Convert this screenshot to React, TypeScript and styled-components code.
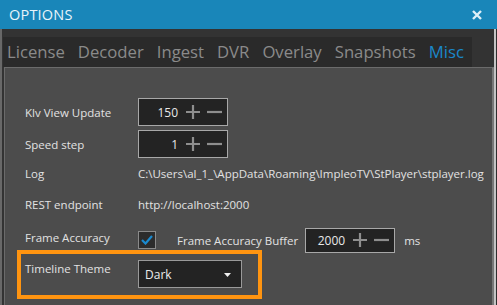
import { createGlobalStyle, styled } from "styled-components";

const GlobalStyle = createGlobalStyle`
  html, body {
    margin: 0;
    padding: 0;
    background: #2e2e2e;
  }
  body {
    font-family: "Open Sans", "Noto Sans", sans-serif;
  }
`;

const Page = styled.div`
  width: 497px;
  height: 305px;
  overflow: hidden;
  display: flex;
  flex-direction: column;
  background: #2e2e2e;
`;

const TitleBar = styled.div`
  height: 29px;
  flex: none;
  background: #1986b9;
  display: flex;
  align-items: center;
  justify-content: space-between;
  padding: 0 15px 0 9px;
`;

const Title = styled.div`
  color: #e8f4fa;
  font-size: 14.5px;
  letter-spacing: 0.2px;
`;

const Body = styled.div`
  width: 490px;
  flex: 1;
  display: flex;
  flex-direction: column;
  align-items: flex-start;
  background: #333333;
  border-left: 2px solid #686868;
  border-right: 2px solid #c4c4c4;
  padding: 8px 0 0 2px;
`;

const TabStrip = styled.div`
  height: 30px;
  display: flex;
  align-items: center;
  gap: 13px;
  background: #2a2a2a;
  padding: 0 8px 0 4px;
  margin-left: -1px;
`;

const Tab = styled.div<{ $active?: boolean }>`
  font-size: 16.7px;
  color: ${(p) => (p.$active ? "#1a88c9" : "#8a8a8a")};
  line-height: 30px;
`;

const Panel = styled.div`
  align-self: stretch;
  flex: 1;
  background: #4c4c4c;
  border: 1px solid #6b6b6b;
  border-right: 2px solid #777777;
  border-bottom: none;
  padding: 30px 0 0 16px;
`;

const Row = styled.div<{ $h: number; $mt?: number }>`
  height: ${(p) => p.$h}px;
  margin-top: ${(p) => p.$mt ?? 0}px;
  display: flex;
  align-items: center;
  padding-left: 4px;
  color: #e2e2e2;
  font-size: 11.5px;
`;

const HighlightRow = styled.div`
  width: 233px;
  height: 41px;
  display: flex;
  align-items: flex-start;
  padding-left: 4px;
  outline: 4px solid #ff9410;
  color: #e2e2e2;
  font-size: 11.5px;
`;

const Label = styled.div<{ $raise?: number; $top?: number }>`
  width: 113px;
  flex: none;
  margin-bottom: ${(p) => p.$raise ?? 0}px;
  margin-top: ${(p) => p.$top ?? 0}px;
`;

const Value = styled.div`
  white-space: nowrap;
`;

const SpinBox = styled.div<{ $h?: number }>`
  width: 90px;
  height: ${(p) => p.$h ?? 28}px;
  box-sizing: border-box;
  background: #232323;
  border: 1px solid #a8a8a8;
  display: flex;
  align-items: center;
  padding-right: 5px;
  font-size: 12px;
  color: #e8e8e8;
`;

const SpinValue = styled.div`
  flex: 1;
  text-align: right;
  margin-right: 8px;
`;

const SpinIcons = styled.div`
  display: flex;
  align-items: center;
  gap: 7px;
`;

const Check = styled.div`
  width: 18px;
  height: 18px;
  box-sizing: border-box;
  border: 1px solid #8a8a8a;
  background: #2c2c2c;
  display: flex;
  align-items: center;
  justify-content: center;
`;

const InlineText = styled.div<{ $ml: number }>`
  margin-left: ${(p) => p.$ml}px;
  white-space: nowrap;
`;

const Select = styled.div`
  width: 104px;
  height: 28px;
  box-sizing: border-box;
  margin-top: 6px;
  background: #232323;
  border: 1px solid #9a9a9a;
  display: flex;
  align-items: center;
  justify-content: space-between;
  padding: 1px 10px 0 6px;
  font-size: 12px;
  color: #ececec;
`;

const Plus = () => (
  <svg width="14" height="14" viewBox="0 0 14 14">
    <path d="M7 0V14M0 7H14" stroke="#8e8e8e" strokeWidth="2.2" />
  </svg>
);

const Minus = () => (
  <svg width="15" height="14" viewBox="0 0 15 14">
    <path d="M0 7H15" stroke="#8e8e8e" strokeWidth="2.2" />
  </svg>
);

function Spin({ value, h }: { value: string; h?: number }) {
  return (
    <SpinBox $h={h}>
      <SpinValue>{value}</SpinValue>
      <SpinIcons>
        <Plus />
        <Minus />
      </SpinIcons>
    </SpinBox>
  );
}

const tabs = ["License", "Decoder", "Ingest", "DVR", "Overlay", "Snapshots", "Misc"];

export default function App() {
  return (
    <Page>
      <GlobalStyle />
      <TitleBar>
        <Title>OPTIONS</Title>
        <svg width="10" height="10" viewBox="0 0 10 10">
          <path d="M1 1L9 9M9 1L1 9" stroke="#dff0f8" strokeWidth="2.4" />
        </svg>
      </TitleBar>
      <Body>
        <TabStrip>
          {tabs.map((t) => (
            <Tab key={t} $active={t === "Misc"}>
              {t}
            </Tab>
          ))}
        </TabStrip>
        <Panel>
          <Row $h={28}>
            <Label>Klv View Update</Label>
            <Spin value="150" />
          </Row>
          <Row $h={28} $mt={4}>
            <Label>Speed step</Label>
            <Spin value="1" />
          </Row>
          <Row $h={30}>
            <Label>Log</Label>
            <Value>C:\Users\al_1_\AppData\Roaming\ImpleoTV\StPlayer\stplayer.log</Value>
          </Row>
          <Row $h={32}>
            <Label>REST endpoint</Label>
            <Value>http://localhost:2000</Value>
          </Row>
          <Row $h={28} $mt={6}>
            <Label $raise={6}>Frame Accuracy</Label>
            <Check>
              <svg width="12" height="10" viewBox="0 0 12 10">
                <path d="M1 5L4.5 8.5L11 1" fill="none" stroke="#1a8ad0" strokeWidth="2.2" />
              </svg>
            </Check>
            <InlineText $ml={21}>Frame Accuracy Buffer</InlineText>
            <InlineText $ml={7}>
              <Spin value="2000" h={25} />
            </InlineText>
            <InlineText $ml={9}>ms</InlineText>
          </Row>
          <HighlightRow>
            <Label $top={7}>Timeline Theme</Label>
            <Select>
              <span>Dark</span>
              <svg width="7" height="4" viewBox="0 0 7 4">
                <path d="M0 0H7L3.5 4Z" fill="#f0f0f0" />
              </svg>
            </Select>
          </HighlightRow>
        </Panel>
      </Body>
    </Page>
  );
}
